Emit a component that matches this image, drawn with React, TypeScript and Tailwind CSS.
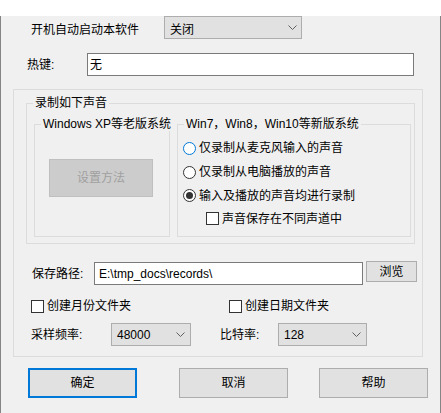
import type { ReactNode } from "react";

function Chevron() {
  return (
    <svg width="9" height="5" viewBox="0 0 9 5" className="shrink-0">
      <polyline points="0.5,0.5 4.5,4.5 8.5,0.5" fill="none" stroke="#606060" strokeWidth="1" />
    </svg>
  );
}

function Combo({
  value,
  className,
  textClass = "",
}: {
  value: string;
  className: string;
  textClass?: string;
}) {
  return (
    <div
      className={`flex h-[23px] items-center justify-between border border-[#adadad] bg-[#e1e1e1] pl-[5px] pr-[4px] ${className}`}
    >
      <span className={`leading-[14px] ${textClass}`}>{value}</span>
      <Chevron />
    </div>
  );
}

function GroupBox({
  title,
  className,
  children,
}: {
  title?: string;
  className: string;
  children?: ReactNode;
}) {
  return (
    <div className={`relative border border-[#dcdcdc] ${className}`}>
      {title && (
        <span className="absolute left-[6px] top-[-8px] whitespace-nowrap bg-[#f0f0f0] px-[2px] leading-[14px]">
          {title}
        </span>
      )}
      {children}
    </div>
  );
}

function CheckBox({ label, className = "" }: { label: string; className?: string }) {
  return (
    <div className={`flex items-center gap-[3px] ${className}`}>
      <span className="h-[13px] w-[13px] shrink-0 border border-[#333] bg-white" />
      <span className="leading-[14px]">{label}</span>
    </div>
  );
}

function Radio({
  label,
  checked = false,
  hot = false,
  className = "",
}: {
  label: string;
  checked?: boolean;
  hot?: boolean;
  className?: string;
}) {
  return (
    <div className={`flex items-center gap-[3px] ${className}`}>
      <span
        className={`flex h-[13px] w-[13px] shrink-0 items-center justify-center rounded-full border bg-white ${
          hot ? "border-[#0078d7]" : "border-[#333]"
        }`}
      >
        {checked && <span className="h-[7px] w-[7px] rounded-full bg-[#333]" />}
      </span>
      <span className="leading-[14px]">{label}</span>
    </div>
  );
}

function Button({ label, primary = false }: { label: string; primary?: boolean }) {
  return (
    <div
      className={`flex h-[30px] w-[109px] items-center justify-center bg-[#e1e1e1] ${
        primary ? "border-2 border-[#0078d7]" : "border border-[#adadad]"
      }`}
    >
      {label}
    </div>
  );
}

export default function App() {
  return (
    <div className="h-[413px] w-[441px] bg-[#f0f0f0] font-['Liberation_Sans','Noto_Sans_CJK_SC',sans-serif] text-[12px] text-black">
      <div className="h-[412px] w-[441px] border-b border-l border-r border-[#858585] bg-[#f0f0f0]">
        {/* autostart */}
        <div className="mt-[16px] flex items-start">
          <span className="ml-[30px] mt-[7px] w-[133px] leading-[14px]">开机自动启动本软件</span>
          <Combo value="关闭" className="w-[138px]" textClass="pt-[4px]" />
        </div>

        {/* hotkey */}
        <div className="mt-[14px] flex items-center">
          <span className="ml-[26px] w-[60px] leading-[14px]">热键:</span>
          <div className="flex h-[23px] w-[327px] items-center border border-[#7a7a7a] bg-white pl-[2px] pt-[1px]">
            无
          </div>
        </div>

        {/* main group */}
        <GroupBox className="ml-[12px] mt-[13px] h-[268px] w-[410px]">
          <GroupBox title="录制如下声音" className="ml-[12px] mt-[13px] h-[141px] w-[389px]">
            <div className="ml-[7px] mt-[20px] flex gap-[7px]">
              <GroupBox title="Windows XP等老版系统" className="h-[113px] w-[136px]">
                <div className="ml-[14px] mt-[34px] flex h-[38px] w-[104px] items-center justify-center border border-[#bfbfbf] bg-[#cccccc] text-[#a0a0a0]">
                  设置方法
                </div>
              </GroupBox>
              <GroupBox title="Win7，Win8，Win10等新版系统" className="h-[113px] w-[234px]">
                <div className="mt-[11px] flex flex-col">
                  <Radio label="仅录制从麦克风输入的声音" hot className="ml-[5px] h-[24px]" />
                  <Radio label="仅录制从电脑播放的声音" className="ml-[5px] h-[24px]" />
                  <Radio label="输入及播放的声音均进行录制" checked className="ml-[5px] h-[23px]" />
                  <CheckBox label="声音保存在不同声道中" className="ml-[28px] h-[23px]" />
                </div>
              </GroupBox>
            </div>
          </GroupBox>

          {/* save path */}
          <div className="mt-[17px] flex items-start">
            <span className="ml-[18px] mt-[6px] w-[62px] leading-[14px]">保存路径:</span>
            <div className="mt-[1px] flex h-[23px] w-[269px] items-center border border-[#7a7a7a] bg-white pl-[4px]">
              E:\tmp_docs\records\
            </div>
            <div className="ml-[3px] flex h-[21px] w-[51px] items-center justify-center border border-[#adadad] bg-[#e1e1e1]">
              浏览
            </div>
          </div>

          {/* folders */}
          <div className="mt-[11px] flex h-[20px] items-center">
            <CheckBox label="创建月份文件夹" className="ml-[17px] w-[198px]" />
            <CheckBox label="创建日期文件夹" />
          </div>

          {/* rates */}
          <div className="mt-[7px] flex items-center">
            <span className="ml-[17px] w-[80px] leading-[14px]">采样频率:</span>
            <Combo value="48000" className="w-[80px] pr-[5px]" />
            <span className="ml-[29px] w-[58px] leading-[14px]">比特率:</span>
            <Combo value="128" className="w-[89px] pr-[5px]" />
          </div>
        </GroupBox>

        {/* buttons */}
        <div className="ml-[27px] mt-[11px] flex">
          <Button label="确定" primary />
          <div className="ml-[42px]">
            <Button label="取消" />
          </div>
          <div className="ml-[31px]">
            <Button label="帮助" />
          </div>
        </div>
      </div>
    </div>
  );
}
